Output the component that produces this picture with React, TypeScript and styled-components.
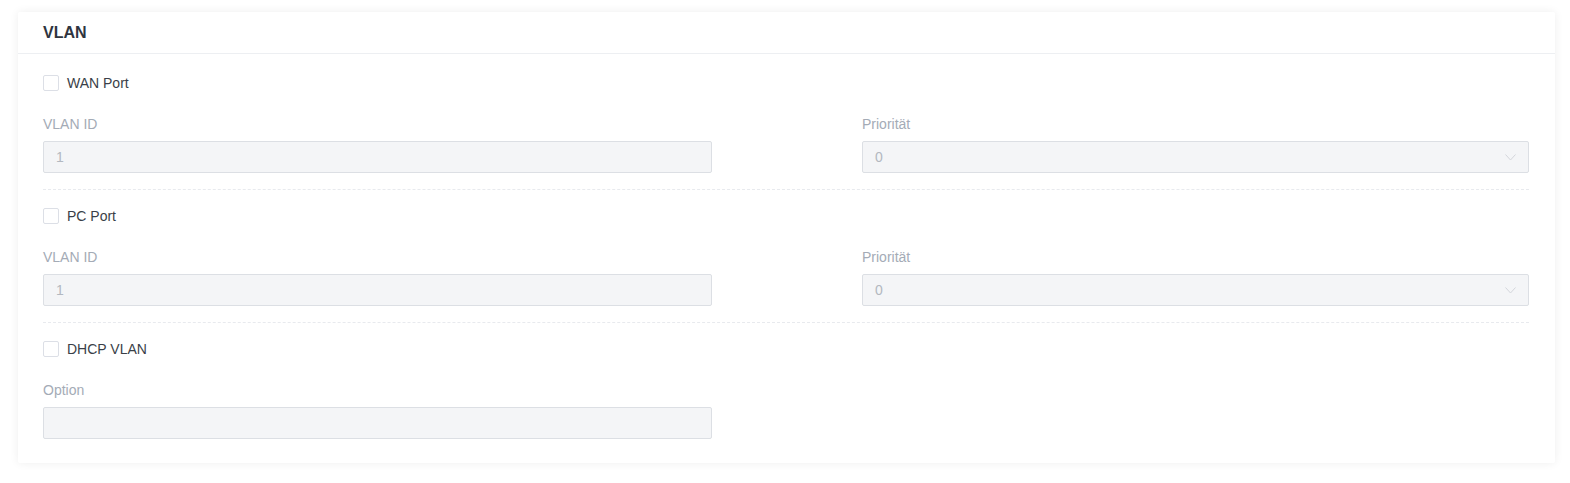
import React from 'react'
import styled, { createGlobalStyle } from 'styled-components'

const GlobalStyle = createGlobalStyle`
  html, body {
    margin: 0;
    padding: 0;
    background: #ffffff;
    font-family: 'Liberation Sans', Arial, sans-serif;
  }
`

const Page = styled.div`
  padding: 12px 15px 20px 18px;
`

const Card = styled.div`
  background: #fff;
  box-shadow: 0 0 10px rgba(0, 0, 0, 0.07);
  border-radius: 2px;
`

const Header = styled.div`
  height: 41px;
  display: flex;
  align-items: center;
  padding: 0 25px;
  border-bottom: 1px solid #edeff2;
  font-size: 16px;
  font-weight: bold;
  color: #2f3540;
`

const Body = styled.div`
  padding: 19px 26px 24px 25px;
`

const Section = styled.div<{ $last?: boolean }>`
  padding-bottom: ${p => (p.$last ? 0 : 16)}px;
  margin-bottom: ${p => (p.$last ? 0 : 16)}px;
  border-bottom: ${p => (p.$last ? 'none' : '1px dashed #e8eaee')};
`

const CheckRow = styled.label`
  display: flex;
  align-items: center;
  gap: 8px;
  height: 20px;
  font-size: 14px;
  color: #3a3f48;
`

const Box = styled.span`
  width: 14px;
  height: 14px;
  border: 1px solid #dcdfe6;
  border-radius: 2px;
  background: #fff;
`

const Fields = styled.div`
  display: grid;
  grid-template-columns: 669px 667px;
  justify-content: space-between;
  margin-top: 21px;
`

const Field = styled.div`
  display: flex;
  flex-direction: column;
`

const Label = styled.div`
  height: 20px;
  line-height: 20px;
  font-size: 14px;
  color: #a4abb6;
  margin-bottom: 7px;
`

const Input = styled.div`
  height: 30px;
  display: flex;
  align-items: center;
  justify-content: space-between;
  padding: 0 12px;
  background: #f4f5f7;
  border: 1px solid #dcdfe4;
  border-radius: 2px;
  font-size: 14px;
  color: #b3b8c0;
`

const Chevron = () => (
  <svg width="11" height="7" viewBox="0 0 11 7" fill="none">
    <path d="M0.5 0.5 L5.5 6 L10.5 0.5" stroke="#d3d6db" strokeWidth="1" />
  </svg>
)

const PortSection = ({ title, last }: { title: string; last?: boolean }) => (
  <Section $last={last}>
    <CheckRow>
      <Box />
      {title}
    </CheckRow>
    <Fields>
      <Field>
        <Label>VLAN ID</Label>
        <Input>1</Input>
      </Field>
      <Field>
        <Label>Priorität</Label>
        <Input>
          0
          <Chevron />
        </Input>
      </Field>
    </Fields>
  </Section>
)

const App = () => (
  <Page>
    <GlobalStyle />
    <Card>
      <Header>VLAN</Header>
      <Body>
        <PortSection title="WAN Port" />
        <PortSection title="PC Port" />
        <Section $last>
          <CheckRow>
            <Box />
            DHCP VLAN
          </CheckRow>
          <Fields>
            <Field>
              <Label>Option</Label>
              <Input />
            </Field>
          </Fields>
        </Section>
      </Body>
    </Card>
  </Page>
)

export default App
